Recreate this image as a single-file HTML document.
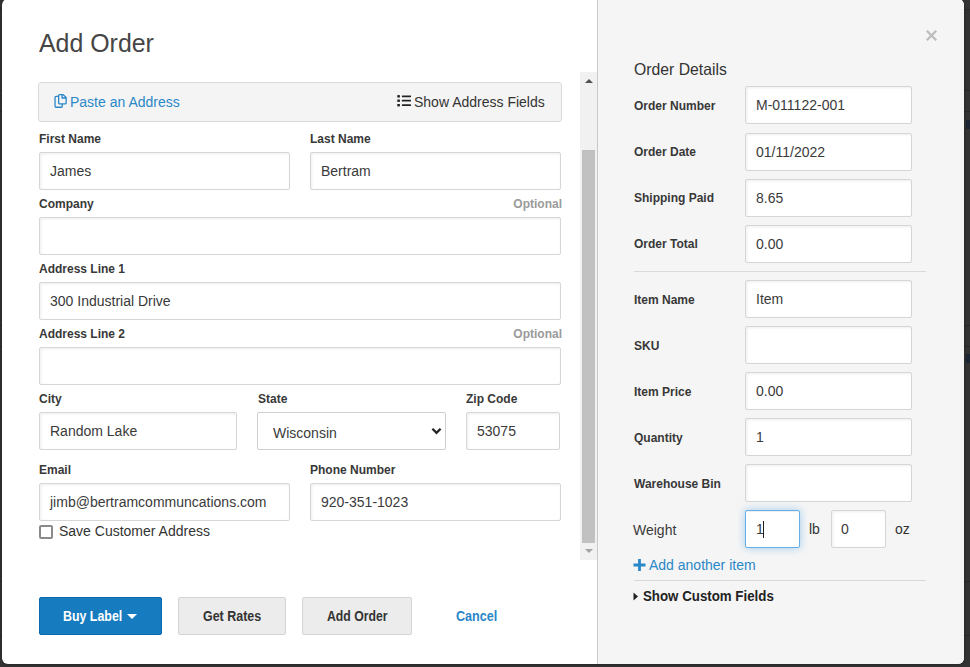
<!DOCTYPE html>
<html><head><meta charset="utf-8">
<style>
*{box-sizing:border-box;margin:0;padding:0}
html,body{width:970px;height:667px;overflow:hidden;background:#333;font-family:"Liberation Sans",sans-serif;color:#333;position:relative}
.bgline{position:absolute;width:970px;height:1px;background:#282828}
.modal{position:absolute;left:2px;top:-1px;width:962px;height:665px;border-radius:6px;background:#fff;overflow:hidden;box-shadow:0 0 3px rgba(0,0,0,.45)}
.rbg{position:absolute;left:595px;top:0;width:367px;height:665px;background:#f5f5f5;border-left:1px solid #c9c9c9}
.a{position:absolute;white-space:nowrap}
.lbl{position:absolute;white-space:nowrap;font-size:12px;font-weight:bold;color:#383838;line-height:14px}
.opt{position:absolute;white-space:nowrap;font-size:12px;font-weight:bold;color:#9a9a9a;line-height:14px;text-align:right}
.inp{position:absolute;border:1px solid #d6d6d6;border-radius:2px;background:#fff;box-shadow:inset 1px 1px 3px rgba(0,0,0,.07);font-size:14px;color:#3a3a3a;padding-left:10px;height:38px;line-height:36px;white-space:nowrap}
.bt{position:absolute;top:608px;font-size:14px;line-height:16px;font-weight:bold;color:#333;white-space:nowrap;transform-origin:0 0}
.btn{position:absolute;height:38px;line-height:36px;text-align:center;font-size:13px;font-weight:bold;color:#333;background:#ececec;border:1px solid #d4d4d4;border-radius:2px;letter-spacing:-0.25px}
</style></head><body>
<div class="bgline" style="top:9px"></div>
<div class="bgline" style="top:90px"></div>
<div class="bgline" style="top:111px"></div>
<div class="bgline" style="top:325px"></div>
<div class="bgline" style="top:346px"></div>
<div class="bgline" style="top:581px"></div>
<div class="bgline" style="top:635px"></div>
<div class="a" style="left:966px;top:120px;width:4px;height:9px;background:#1c2533"></div>
<div class="a" style="left:966px;top:354px;width:4px;height:9px;background:#1c2533"></div>
<div class="modal">
 <div class="rbg"></div>
</div>

<!-- LEFT -->
<div class="a" style="left:39px;top:28px;font-size:26px;color:#454545;line-height:30px;transform:scaleX(0.958);transform-origin:0 0">Add Order</div>

<!-- scrollbar -->
<div class="a" style="left:580px;top:72px;width:17px;height:488px;background:#f1f1f1"></div>
<div class="a" style="left:582px;top:150px;width:13px;height:393px;background:#c1c1c1"></div>
<div class="a" style="left:585px;top:79px;width:0;height:0;border-left:4px solid transparent;border-right:4px solid transparent;border-bottom:4px solid #505050"></div>
<div class="a" style="left:585px;top:549px;width:0;height:0;border-left:4px solid transparent;border-right:4px solid transparent;border-top:4px solid #a3a3a3"></div>

<!-- paste bar -->
<div class="a" style="left:38px;top:82px;width:524px;height:40px;background:#f4f4f4;border:1px solid #d7dadc;border-radius:3px"></div>
<svg class="a" style="left:54px;top:93px" width="14" height="16" viewBox="0 0 14 16">
 <path d="M4.65 3.45 H2.05 Q1.05 3.45 1.05 4.45 V13.25 Q1.05 14.25 2.05 14.25 H7.25 Q8.25 14.25 8.25 13.25 V10.95" fill="none" stroke="#2a87c8" stroke-width="1.3"/>
 <path d="M5.65 1.55 H9.1 L12.15 4.6 V9.95 Q12.15 10.95 11.15 10.95 H5.65 Q4.65 10.95 4.65 9.95 V2.55 Q4.65 1.55 5.65 1.55 Z M8.1 1.6 V5.0 H12.1" fill="none" stroke="#2a87c8" stroke-width="1.3"/>
</svg>
<div class="a" style="left:70px;top:94px;font-size:14px;color:#2a87c8;line-height:16px">Paste an Address</div>
<svg class="a" style="left:397px;top:94px" width="15" height="13" viewBox="0 0 15 13">
 <rect x="0.3" y="1.1" width="2.6" height="2.4" fill="#222"/>
 <rect x="0.3" y="5.5" width="2.6" height="2.4" fill="#222"/>
 <rect x="0.3" y="10" width="2.6" height="2.4" fill="#222"/>
 <rect x="4.9" y="1.4" width="9.1" height="1.8" rx="0.4" fill="#222"/>
 <rect x="4.9" y="5.8" width="9.1" height="1.8" rx="0.4" fill="#222"/>
 <rect x="4.9" y="10.3" width="9.1" height="1.8" rx="0.4" fill="#222"/>
</svg>
<div class="a" style="left:414px;top:94px;font-size:14px;color:#333;line-height:16px">Show Address Fields</div>

<div class="lbl" style="left:39px;top:132px">First Name</div>
<div class="inp" style="left:39px;top:152px;width:251px">James</div>
<div class="lbl" style="left:310px;top:132px">Last Name</div>
<div class="inp" style="left:310px;top:152px;width:251px">Bertram</div>

<div class="lbl" style="left:39px;top:197px">Company</div>
<div class="opt" style="left:461px;width:101px;top:197px">Optional</div>
<div class="inp" style="left:39px;top:217px;width:522px"></div>

<div class="lbl" style="left:39px;top:262px">Address Line 1</div>
<div class="inp" style="left:39px;top:282px;width:522px">300 Industrial Drive</div>

<div class="lbl" style="left:39px;top:327px">Address Line 2</div>
<div class="opt" style="left:461px;width:101px;top:327px">Optional</div>
<div class="inp" style="left:39px;top:347px;width:522px"></div>

<div class="lbl" style="left:39px;top:392px">City</div>
<div class="inp" style="left:39px;top:412px;width:198px">Random Lake</div>
<div class="lbl" style="left:258px;top:392px">State</div>
<div class="inp" style="left:257px;top:412px;width:189px;padding-left:15px;line-height:40px;box-shadow:none;border-color:#cfcfcf">Wisconsin</div>
<svg class="a" style="left:431px;top:427px" width="11" height="9" viewBox="0 0 11 9"><path d="M1.4 1.8 L5.5 5.9 L9.6 1.8" fill="none" stroke="#222" stroke-width="2.3"/></svg>
<div class="lbl" style="left:466px;top:392px">Zip Code</div>
<div class="inp" style="left:466px;top:412px;width:94px">53075</div>

<div class="lbl" style="left:39px;top:463px">Email</div>
<div class="inp" style="left:39px;top:483px;width:251px">jimb@bertramcommuncations.com</div>
<div class="lbl" style="left:310px;top:463px">Phone Number</div>
<div class="inp" style="left:310px;top:483px;width:251px">920-351-1023</div>

<div class="a" style="left:39px;top:525px;width:14px;height:14px;border:2px solid #8a8a8a;border-radius:2px;background:#fff"></div>
<div class="a" style="left:59px;top:523px;font-size:14px;line-height:16px;color:#333">Save Customer Address</div>

<div class="btn" style="left:39px;top:597px;width:123px;background:#167cbf;border-color:#0b6aae"></div>
<div class="bt" style="left:63px;color:#fff;transform:scaleX(0.885)">Buy Label</div>
<div class="a" style="left:127px;top:614px;width:0;height:0;border-left:5px solid transparent;border-right:5px solid transparent;border-top:5px solid #fff"></div>
<div class="btn" style="left:178px;top:597px;width:108px"></div>
<div class="bt" style="left:203px;transform:scaleX(0.89)">Get Rates</div>
<div class="btn" style="left:302px;top:597px;width:110px"></div>
<div class="bt" style="left:327px;transform:scaleX(0.875)">Add Order</div>
<div class="bt" style="left:456px;color:#2a87c8;transform:scaleX(0.9)">Cancel</div>

<!-- RIGHT -->
<svg class="a" style="left:925px;top:29px" width="13" height="13" viewBox="0 0 13 13"><path d="M1.8 1.8 L11.2 11.2 M11.2 1.8 L1.8 11.2" stroke="#bdbdbd" stroke-width="2.3"/></svg>
<div class="a" style="left:634px;top:60px;font-size:16.5px;line-height:18px;color:#333;transform:scaleX(0.955);transform-origin:0 0">Order Details</div>

<div class="lbl" style="left:634px;top:99px">Order Number</div>
<div class="inp" style="left:745px;top:86px;width:167px">M-011122-001</div>
<div class="lbl" style="left:634px;top:145px">Order Date</div>
<div class="inp" style="left:745px;top:133px;width:167px">01/11/2022</div>
<div class="lbl" style="left:634px;top:191px">Shipping Paid</div>
<div class="inp" style="left:745px;top:179px;width:167px">8.65</div>
<div class="lbl" style="left:634px;top:237px">Order Total</div>
<div class="inp" style="left:745px;top:225px;width:167px">0.00</div>
<div class="a" style="left:634px;top:271px;width:292px;height:1px;background:#d9d9d9"></div>

<div class="lbl" style="left:634px;top:293px">Item Name</div>
<div class="inp" style="left:745px;top:280px;width:167px">Item</div>
<div class="lbl" style="left:634px;top:339px">SKU</div>
<div class="inp" style="left:745px;top:326px;width:167px"></div>
<div class="lbl" style="left:634px;top:385px">Item Price</div>
<div class="inp" style="left:745px;top:372px;width:167px">0.00</div>
<div class="lbl" style="left:634px;top:431px">Quantity</div>
<div class="inp" style="left:745px;top:418px;width:167px">1</div>
<div class="lbl" style="left:634px;top:477px">Warehouse Bin</div>
<div class="inp" style="left:745px;top:464px;width:167px"></div>

<div class="a" style="left:633px;top:522px;font-size:14px;line-height:16px;color:#3a3a3a">Weight</div>
<div class="inp" style="left:745px;top:510px;width:55px;border-color:#66afe9;box-shadow:inset 0 1px 1px rgba(0,0,0,.075),0 0 8px rgba(102,175,233,.6)">1</div>
<div class="a" style="left:763px;top:521px;width:1px;height:17px;background:#222"></div>
<div class="a" style="left:809px;top:521px;font-size:14px;line-height:16px;color:#333">lb</div>
<div class="inp" style="left:831px;top:510px;width:55px;padding-left:9px">0</div>
<div class="a" style="left:895px;top:521px;font-size:14px;line-height:16px;color:#333">oz</div>

<svg class="a" style="left:633px;top:559px" width="13" height="12" viewBox="0 0 13 12"><path d="M6.5 0 V12 M0.5 6 H12.5" stroke="#2a87c8" stroke-width="2.8"/></svg>
<div class="a" style="left:649px;top:557px;font-size:14px;line-height:16px;color:#2a87c8">Add another item</div>
<div class="a" style="left:634px;top:580px;width:292px;height:1px;background:#d9d9d9"></div>
<svg class="a" style="left:633px;top:592px" width="6" height="9" viewBox="0 0 6 9"><path d="M0.5 0.5 L5 4.5 L0.5 8.5 Z" fill="#222"/></svg>
<div class="a" style="left:643px;top:588px;font-size:14px;line-height:16px;font-weight:bold;color:#222;transform:scaleX(0.95);transform-origin:0 0">Show Custom Fields</div>
</body></html>
